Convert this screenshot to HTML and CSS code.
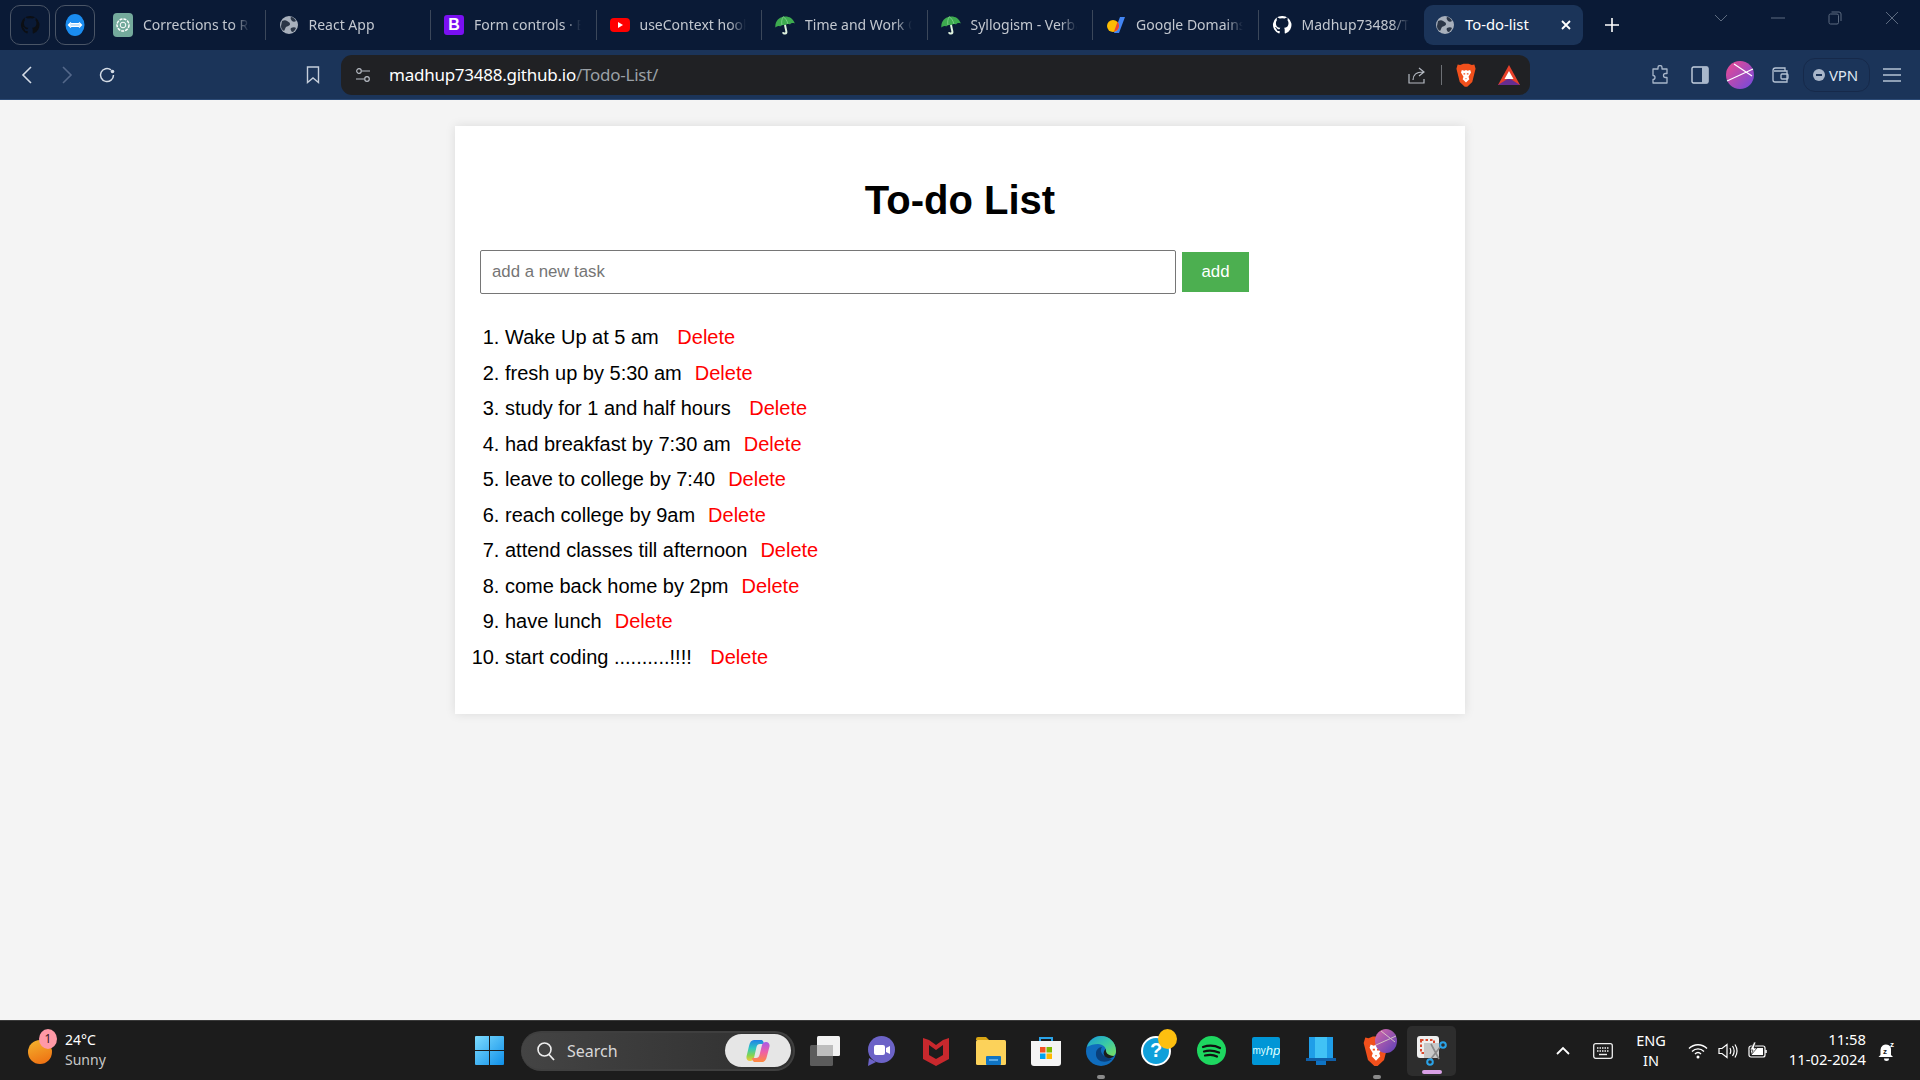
FILE: index.html
```html
<!DOCTYPE html>
<html lang="en">
<head>
<meta charset="utf-8">
<title>To-do-list</title>
<link rel="stylesheet" href="styles.css">
</head>
<body>
<svg class="defs" width="0" height="0" aria-hidden="true">
  <defs>
    <symbol id="globe" viewBox="0 0 20 20">
      <circle cx="10" cy="10" r="9" fill="#a8b0bc"/>
      <path d="M3 6c2-1 4-1 5 0s3 1 3 3-3 2-4 3-1 3-2 4c-2-1-3-3-3-5zM12 2c2 0 4 2 5 4-1 1-3 1-4 0s-2-3-1-4zM12 13c2-1 4-1 5 0-1 2-2 4-4 4-1-1-2-3-1-4z" fill="#2b3647"/>
    </symbol>
    <symbol id="umbrella" viewBox="0 0 20 20">
      <g transform="rotate(-12 10 10)">
        <path d="M0 10.500C1 4 5.500 1.500 10 1.500s9 2.500 10 9c-1.800-1.200-3.500-1.200-5 0-1.500-1.200-3.500-1.200-5 0-1.500-1.200-3.500-1.200-5 0-1.500-1.200-3.200-1.200-5 0z" fill="#3dab4f"/>
        <path d="M10 1.500c-2 2-3 5-3 8M10 1.500c2 2 3 5 3 8" fill="none" stroke="#7ed08a" stroke-width=".8"/>
        <path d="M10 10v6.500c0 2.400-3.500 2.400-3.500.2" fill="none" stroke="#dff2df" stroke-width="2"/>
      </g>
    </symbol>
    <symbol id="brave" viewBox="0 0 24 28">
      <path d="M5 2l4-1.500h6L19 2l3-.5 1.500 5-1 4-3 12-6 5.500h-3l-6-5.500-3-12-1-4L2 1.500z" fill="#f1501c"/>
      <path d="M7 8l3 1 2-1 2 1 3-1 1 3-3 5 1 3-4 4-4-4 1-3-3-5z" fill="#fff"/>
      <path d="M9 12h2v1.500H9zM13 12h2v1.500h-2zM11 18h2l-1 1.500z" fill="#f1501c"/>
    </symbol>
  </defs>
</svg>
<div class="window">
  <header class="tabstrip">
    <div class="pin">
      <svg width="20" height="20" viewBox="0 0 20 20"><path d="M10 1a9 9 0 0 0-3 17.500c.500 0 .700-.200.700-.500v-2c-2.500.500-3-1-3.200-1.800-.200-.500-.700-1-1-1.200-.400-.200-.800-.700 0-.700s1.300.700 1.500 1c.900 1.500 2.300 1 2.800.800 0-.600.300-1 .600-1.300-2.200-.200-4.500-1.100-4.500-4.900 0-1.100.400-2 1-2.700-.100-.200-.400-1.300.100-2.600 0 0 .800-.300 2.700 1a9 9 0 0 1 5 0c1.900-1.300 2.700-1 2.700-1 .500 1.300.200 2.400.100 2.600.600.700 1 1.600 1 2.700 0 3.800-2.300 4.700-4.500 4.900.400.300.700.900.700 1.900V18c0 .300.200.600.700.500A9 9 0 0 0 10 1z" fill="#0c0f14"/></svg>
    </div>
    <div class="pin">
      <svg width="20" height="22" viewBox="0 0 20 22"><ellipse cx="10" cy="11" rx="9.500" ry="11" fill="#1a8cf0"/><path d="M3.500 11h13M6 8.500L3.500 11 6 13.500M14 8.500l2.500 2.500-2.500 2.500" fill="none" stroke="#fff" stroke-width="1.300"/><path d="M6 9.500h8M6 12.500h8" stroke="#fff" stroke-width="1"/></svg>
    </div>
    <div class="tabs">
      <div class="tab">
        <svg class="favicon" width="20" height="24" viewBox="0 0 20 24"><rect width="20" height="24" rx="4" fill="#74aa9c"/><circle cx="10" cy="12" r="6" fill="none" stroke="#fff" stroke-width="1.500" stroke-dasharray="3 1"/><circle cx="10" cy="12" r="2.800" fill="none" stroke="#fff" stroke-width="1"/></svg>
        <span class="tab-title">Corrections to React App</span>
      </div>
      <div class="tab">
        <svg class="favicon" width="20" height="20"><use href="#globe"/></svg>
        <span class="tab-title">React App</span>
      </div>
      <div class="tab">
        <span class="favicon boot">B</span>
        <span class="tab-title">Form controls · Bootstrap</span>
      </div>
      <div class="tab">
        <svg class="favicon" width="20" height="20" viewBox="0 0 20 20"><rect y="3" width="20" height="14" rx="4" fill="#f00"/><path d="M8 7l5 3-5 3z" fill="#fff"/></svg>
        <span class="tab-title">useContext hook in React</span>
      </div>
      <div class="tab">
        <svg class="favicon" width="20" height="20"><use href="#umbrella"/></svg>
        <span class="tab-title">Time and Work Questions</span>
      </div>
      <div class="tab">
        <svg class="favicon" width="20" height="20"><use href="#umbrella"/></svg>
        <span class="tab-title">Syllogism - Verbal Reasoning</span>
      </div>
      <div class="tab">
        <svg class="favicon" width="20" height="20" viewBox="0 0 20 20"><path d="M14 2h5l-6 16H8z" fill="#4285f4"/><circle cx="7" cy="11" r="6" fill="#fbbc04"/><path d="M11.500 7L8 16.500a6 6 0 0 0 5-5.500c0-1.500-.500-3-1.500-4z" fill="#ea4335"/></svg>
        <span class="tab-title">Google Domains</span>
      </div>
      <div class="tab tab-last">
        <svg class="favicon" width="20" height="20" viewBox="0 0 20 20"><path d="M10 1a9 9 0 0 0-3 17.500c.500 0 .700-.200.700-.500v-2c-2.500.500-3-1-3.200-1.800-.200-.500-.700-1-1-1.200-.400-.200-.800-.700 0-.700s1.300.700 1.500 1c.900 1.500 2.300 1 2.800.800 0-.600.300-1 .600-1.300-2.200-.200-4.500-1.100-4.500-4.900 0-1.100.400-2 1-2.700-.100-.200-.400-1.300.100-2.600 0 0 .800-.300 2.700 1a9 9 0 0 1 5 0c1.900-1.300 2.700-1 2.700-1 .500 1.300.200 2.400.100 2.600.600.700 1 1.600 1 2.700 0 3.800-2.300 4.700-4.500 4.900.400.300.700.900.700 1.900V18c0 .300.200.600.700.500A9 9 0 0 0 10 1z" fill="#fff"/></svg>
        <span class="tab-title">Madhup73488/Todo-List</span>
      </div>
      <div class="tab-active">
        <svg class="favicon" width="20" height="20"><use href="#globe"/></svg>
        <span class="active-title">To-do-list</span>
        <svg width="12" height="12" viewBox="0 0 12 12"><path d="M2 2l8 8M10 2l-8 8" stroke="#fff" stroke-width="1.800"/></svg>
      </div>
    </div>
    <div class="newtab"><svg width="16" height="16" viewBox="0 0 16 16"><path d="M8 1v14M1 8h14" stroke="#fff" stroke-width="1.600"/></svg></div>
    <div class="winctl winctl-list"><svg width="14" height="8" viewBox="0 0 14 8"><path d="M1 1l6 6 6-6" fill="none" stroke="#5d6b80" stroke-width="1"/></svg></div>
    <div class="winctl"><svg width="14" height="2" viewBox="0 0 14 2"><path d="M0 1h14" stroke="#5d6b80" stroke-width="1"/></svg></div>
    <div class="winctl"><svg width="14" height="14" viewBox="0 0 14 14"><rect x="1" y="3" width="9.500" height="10" rx="1.500" fill="none" stroke="#5d6b80"/><path d="M3.500 1h7.500a2 2 0 0 1 2 2v7" fill="none" stroke="#5d6b80"/></svg></div>
    <div class="winctl"><svg width="14" height="14" viewBox="0 0 14 14"><path d="M1 1l12 12M13 1L1 13" stroke="#5d6b80" stroke-width="1"/></svg></div>
  </header>

  <nav class="toolbar">
    <div class="tbtn"><svg width="12" height="18" viewBox="0 0 12 18"><path d="M10 1L2 9l8 8" fill="none" stroke="#d5dce6" stroke-width="1.600"/></svg></div>
    <div class="tbtn"><svg width="12" height="18" viewBox="0 0 12 18"><path d="M2 1l8 8-8 8" fill="none" stroke="#54688a" stroke-width="1.600"/></svg></div>
    <div class="tbtn"><svg width="18" height="18" viewBox="0 0 18 18"><path d="M15.500 9a6.500 6.500 0 1 1-2.500-5.100" fill="none" stroke="#d5dce6" stroke-width="1.500"/><circle cx="14.500" cy="5.500" r="1.800" fill="#d5dce6"/></svg></div>
    <div class="tbtn bookmark"><svg width="14" height="18" viewBox="0 0 14 18"><path d="M1.500 1h11v15.500L7 12l-5.500 4.500z" fill="none" stroke="#c5cedb" stroke-width="1.400"/></svg></div>
    <div class="urlbar">
      <svg class="url-tune" width="16" height="16" viewBox="0 0 16 16"><circle cx="4" cy="4" r="2.300" fill="none" stroke="#b8bdc5" stroke-width="1.200"/><path d="M7 4h8M1 12h8" stroke="#b8bdc5" stroke-width="1.200"/><circle cx="12" cy="12" r="2.300" fill="none" stroke="#b8bdc5" stroke-width="1.200"/></svg>
      <span class="url-text"><span class="url-host">madhup73488.github.io</span><span class="url-path">/Todo-List/</span></span>
      <svg class="url-share" width="18" height="18" viewBox="0 0 18 18"><path d="M1 8v9h15v-4" fill="none" stroke="#b5bac2" stroke-width="1.200"/><path d="M5 14c0-5 3-8 10-8M11 2l5 4-5 4" fill="none" stroke="#b5bac2" stroke-width="1.200"/></svg>
      <span class="url-sep"></span>
      <svg class="url-brave" width="20" height="24"><use href="#brave"/></svg>
      <svg class="url-bat" width="24" height="22" viewBox="0 0 24 22"><path d="M12 1L1 21h22z" fill="#e8412b"/><path d="M1 21l11-7 11 7z" fill="#662d91"/><path d="M12 7l-4.500 8h9z" fill="#fff"/></svg>
    </div>
    <div class="tbtn ext-first"><svg width="18" height="20" viewBox="0 0 18 20"><path d="M7 2.500a2 2 0 0 1 4 0V4h5v4.500h-1.500a2 2 0 0 0 0 4H16V18H2v-3.500a2 2 0 0 0 0-4V4h5z" fill="none" stroke="#a8b6ca" stroke-width="1.300" stroke-linejoin="round"/></svg></div>
    <div class="tbtn"><svg width="18" height="18" viewBox="0 0 18 18"><rect x="1" y="1" width="16" height="16" rx="1.500" fill="#1b3459" stroke="#c5d0df" stroke-width="1.400"/><rect x="11" y="1" width="6" height="16" fill="#a9b8cc"/></svg></div>
    <div class="tbtn"><svg width="28" height="28" viewBox="0 0 28 28"><defs><linearGradient id="av" x1="0" y1="0" x2="1" y2="1"><stop offset="0" stop-color="#ef4a8e"/><stop offset="1" stop-color="#6d4ae0"/></linearGradient></defs><circle cx="14" cy="14" r="14" fill="url(#av)"/><path d="M1 20L27 8M8 3l18 12" stroke="#fff" stroke-width="1.200"/></svg></div>
    <div class="tbtn"><svg width="18" height="18" viewBox="0 0 18 18"><path d="M2 4.500A2.500 2.500 0 0 1 4.500 2H14v2.500M2 4.500V14a2 2 0 0 0 2 2h12V5H3" fill="none" stroke="#b5c2d4" stroke-width="1.300"/><rect x="10" y="8" width="7" height="5" rx="1" fill="none" stroke="#b5c2d4" stroke-width="1.300"/></svg></div>
    <div class="vpn"><span class="vpn-dot"></span>VPN</div>
    <div class="tbtn menu"><svg width="18" height="14" viewBox="0 0 18 14"><path d="M0 1h18M0 7h18M0 13h18" stroke="#b5c2d4" stroke-width="1.400"/></svg></div>
  </nav>

  <main class="page">
    <section class="card">
      <h1 class="title">To-do List</h1>
      <div class="add-row">
        <input class="task-input" type="text" placeholder="add a new task">
        <button class="add-btn">add</button>
      </div>
      <ol class="tasks">
        <li><span class="task">Wake Up at 5 am </span><button class="delete">Delete</button></li>
        <li><span class="task">fresh up by 5:30 am</span><button class="delete">Delete</button></li>
        <li><span class="task">study for 1 and half hours </span><button class="delete">Delete</button></li>
        <li><span class="task">had breakfast by 7:30 am</span><button class="delete">Delete</button></li>
        <li><span class="task">leave to college by 7:40</span><button class="delete">Delete</button></li>
        <li><span class="task">reach college by 9am</span><button class="delete">Delete</button></li>
        <li><span class="task">attend classes till afternoon</span><button class="delete">Delete</button></li>
        <li><span class="task">come back home by 2pm</span><button class="delete">Delete</button></li>
        <li><span class="task">have lunch</span><button class="delete">Delete</button></li>
        <li><span class="task">start coding ..........!!!! </span><button class="delete">Delete</button></li>
      </ol>
    </section>
  </main>

  <footer class="taskbar">
    <div class="weather">
      <div class="sun"><span class="sun-badge">1</span></div>
      <div class="weather-text"><span class="temp">24°C</span><span class="cond">Sunny</span></div>
    </div>
    <svg class="start" width="29" height="29" viewBox="0 0 29 29"><defs><linearGradient id="win" x1="0" y1="0" x2="1" y2="1"><stop offset="0" stop-color="#7ddcff"/><stop offset="1" stop-color="#0f8fe8"/></linearGradient></defs><path d="M0 1a1 1 0 0 1 1-1h13v14H0zM15 0h13a1 1 0 0 1 1 1v13H15zM0 15h14v14H1a1 1 0 0 1-1-1zM15 15h14v13a1 1 0 0 1-1 1H15z" fill="url(#win)"/></svg>
    <div class="search">
      <svg width="20" height="20" viewBox="0 0 20 20"><circle cx="8.500" cy="8.500" r="6.500" fill="none" stroke="#eee" stroke-width="1.600"/><path d="M13 13.500l5 5.500" stroke="#eee" stroke-width="1.800"/></svg>
      <span class="search-label">Search</span>
      <span class="copilot">
        <svg width="24" height="24" viewBox="0 0 24 24"><defs><linearGradient id="cp" x1="0" y1="0" x2="0" y2="1"><stop offset="0" stop-color="#1f7fe8"/><stop offset=".4" stop-color="#2fc7c0"/><stop offset=".75" stop-color="#8bd44a"/><stop offset="1" stop-color="#f7c83d"/></linearGradient><linearGradient id="cp2" x1="0" y1="0" x2="0" y2="1"><stop offset="0" stop-color="#a65ae8"/><stop offset=".5" stop-color="#ee5fa8"/><stop offset="1" stop-color="#ff8a3d"/></linearGradient></defs><path d="M8 1h7c1 0 2 .5 2.500 2L18 5h-4c-2 0-3 1-3.500 3L8 19c-.5 2-2 3-4 3-2.500 0-4-2-3.500-4.500L3 7c.8-4 2.500-6 5-6z" fill="url(#cp)"/><path d="M16 23H9c-1 0-2-.5-2.500-2L6 19h4c2 0 3-1 3.500-3L16 6c.5-2 2-3 4-3 2.500 0 4 2 3.500 4.500L21 17c-.8 4-2.500 6-5 6z" fill="url(#cp2)"/></svg>
      </span>
    </div>
    <div class="apps">
      <div class="app"><svg width="32" height="30" viewBox="0 0 32 30"><rect x="0" y="9" width="23" height="21" rx="1.500" fill="#5b5b5b"/><rect x="7" y="0" width="23" height="20" rx="1.500" fill="#f2f2f2"/><rect x="7" y="9" width="16" height="11" fill="#bdbdbd"/></svg></div>
      <div class="app"><svg width="28" height="30" viewBox="0 0 28 30"><circle cx="14.500" cy="13.500" r="13.500" fill="#6c63c7"/><path d="M2 22L1 30l8-4z" fill="#6c63c7"/><rect x="7" y="9" width="11" height="10" rx="2" fill="#fff"/><path d="M19 12l4-2v8l-4-2z" fill="#fff"/></svg></div>
      <div class="app"><svg width="26" height="30" viewBox="0 0 26 30"><path d="M0 2l6 2 7 5 7-5 6-2v21l-13 7-13-7z" fill="#c8282d"/><path d="M6 9l7 5 7-5v10l-7 4-7-4z" fill="#1c1c1c"/></svg></div>
      <div class="app"><svg width="30" height="28" viewBox="0 0 30 28"><path d="M0 2a2 2 0 0 1 2-2h8l3 3h-13z" fill="#d9a514"/><rect y="3" width="30" height="25" rx="1.500" fill="#fcd25a"/><rect x="10" y="19" width="15" height="9" rx="1" fill="#0f74c4"/><path d="M13 23h9" stroke="#8fd0ff" stroke-width="1.200"/></svg></div>
      <div class="app"><svg width="30" height="30" viewBox="0 0 30 30"><path d="M9 5V2h12v3" fill="none" stroke="#2aa3e8" stroke-width="2"/><path d="M0 5h30v22a3 3 0 0 1-3 3H3a3 3 0 0 1-3-3z" fill="#f4f4f4"/><rect x="9" y="11" width="5.500" height="5.500" fill="#f25022"/><rect x="15.500" y="11" width="5.500" height="5.500" fill="#7fba00"/><rect x="9" y="17.500" width="5.500" height="5.500" fill="#00a4ef"/><rect x="15.500" y="17.500" width="5.500" height="5.500" fill="#ffb900"/></svg></div>
      <div class="app app-run"><svg width="30" height="30" viewBox="0 0 30 30"><defs><linearGradient id="edge" x1="0" y1="0" x2="1" y2="1"><stop offset="0" stop-color="#1a9ad6"/><stop offset=".5" stop-color="#38c9a7"/><stop offset="1" stop-color="#7ee05b"/></linearGradient></defs><circle cx="15" cy="15" r="15" fill="#0f6cbd"/><path d="M1 11C3 4 9 0 15 0c8 0 15 6 15 15 0 4-3 6-6 6-3 0-5-2-4-5 1-4-3-8-8-8-4 0-8 1-11 3z" fill="url(#edge)"/><path d="M26 23c-6 5-17 3-16-6 0-3 3-6 6-6-3 4 0 10 10 12z" fill="#0a3f7a"/><path d="M28 20c-2 3-8 3-10-1-1-2 0-5 2-6-1 3 2 7 8 7z" fill="#1c1c1c"/></svg></div>
      <div class="app"><div class="help"><span class="help-mark">?</span><span class="help-dot"></span></div></div>
      <div class="app"><svg width="29" height="29" viewBox="0 0 29 29"><circle cx="14.500" cy="14.500" r="14.500" fill="#1ed760"/><path d="M6 11c6-2 12-1.500 17 1M7 15.500c5-1.500 10-1 15 1M8 19.500c4-1 9-.7 12 1" fill="none" stroke="#111" stroke-width="2.200" stroke-linecap="round"/></svg></div>
      <div class="app"><span class="myhp">my<i>hp</i></span></div>
      <div class="app"><svg width="30" height="28" viewBox="0 0 30 28"><path d="M3 0h24v22H3z" fill="#1f9ee8"/><path d="M9 0h12v22H9z" fill="#41c2f5"/><path d="M0 21h30v3H0z" fill="#0f5fa8"/><path d="M10 24h10v4H10z" fill="#0f74c4"/></svg></div>
      <div class="app app-run"><svg class="brave-task" width="26" height="30"><use href="#brave"/></svg>
        <svg class="profile" width="22" height="24" viewBox="0 0 22 24"><defs><linearGradient id="pf" x1="0" y1="0" x2="1" y2="1"><stop offset="0" stop-color="#d96aa8"/><stop offset="1" stop-color="#5a3fb8"/></linearGradient></defs><ellipse cx="11" cy="12" rx="11" ry="12" fill="url(#pf)"/><path d="M1 16L21 7M6 2l14 11" stroke="#eec" stroke-width="1" opacity=".7"/></svg>
      </div>
      <div class="app app-active">
        <svg width="30" height="30" viewBox="0 0 30 30"><rect x="0" y="0" width="22" height="22" rx="3" fill="#efefef"/><rect x="4" y="4" width="13" height="13" fill="none" stroke="#d9482e" stroke-width="2" stroke-dasharray="2.500 2"/><rect x="7" y="7" width="15" height="15" fill="#c8c8c8"/><path d="M14 8l8 15M24 10L13 24" stroke="#8a8a8a" stroke-width="1.600"/><circle cx="26" cy="9" r="2.800" fill="none" stroke="#2aa3e8" stroke-width="2"/><circle cx="13" cy="26" r="2.800" fill="none" stroke="#2aa3e8" stroke-width="2"/></svg>
      </div>
    </div>
    <div class="tray">
      <div class="tray-item w40"><svg width="14" height="9" viewBox="0 0 14 9"><path d="M1 8l6-6 6 6" fill="none" stroke="#fff" stroke-width="1.800"/></svg></div>
      <div class="tray-item w40"><svg width="20" height="16" viewBox="0 0 20 16"><rect x=".700" y=".700" width="18.600" height="14.600" rx="2" fill="none" stroke="#eee" stroke-width="1.300"/><path d="M4 5h12M4 8h12" stroke="#eee" stroke-width="1.500" stroke-dasharray="1.500 1"/><path d="M6 11.500h8" stroke="#eee" stroke-width="1.400"/></svg></div>
      <div class="lang"><span>ENG</span><span>IN</span></div>
      <div class="tray-item w30"><svg width="20" height="16" viewBox="0 0 20 16"><path d="M1 5.500c5-5 13-5 18 0M4 8.500c3.500-3.500 8.500-3.500 12 0M7 11c2-2 4-2 6 0" fill="none" stroke="#fff" stroke-width="1.400"/><circle cx="10" cy="14" r="1.500" fill="#fff"/></svg></div>
      <div class="tray-item w30"><svg width="20" height="18" viewBox="0 0 20 18"><path d="M1 6.500h3L9 2.500v13l-5-4H1z" fill="none" stroke="#fff" stroke-width="1.200"/><path d="M12 6c1 2 1 4 0 6M14.500 4c2 3 2 7 0 10M17 2.500c2.500 4 2.500 9 0 13" fill="none" stroke="#fff" stroke-width="1.200"/></svg></div>
      <div class="tray-item w30"><svg width="20" height="18" viewBox="0 0 20 18"><rect x="1" y="4" width="16" height="11" rx="2" fill="none" stroke="#fff" stroke-width="1.200"/><rect x="3" y="6" width="12" height="7" fill="#fff"/><path d="M18 8v3" stroke="#fff" stroke-width="1.500"/><path d="M6 0L2 8h3l-2 5 6-7H6l2-6z" fill="#fff" stroke="#1c1c1c" stroke-width=".700"/></svg></div>
      <div class="clock"><span>11:58</span><span>11-02-2024</span></div>
      <div class="bell"><svg width="18" height="20" viewBox="0 0 18 20"><path d="M2.500 14V9a5.500 5.500 0 0 1 7-5.300c1 .3 2.500 1 3 2.300.500 1 .500 2 .500 3v5l2 2H.500z" fill="#fff"/><path d="M6 17.500h5a2.500 2.500 0 0 1-5 0z" fill="#fff"/><text class="bell-z" x="5" y="13">z</text><text class="bell-z2" x="12" y="6">z</text></svg></div>
    </div>
  </footer>
</div>
</body>
</html>
```

FILE: styles.css
```css
* { box-sizing: border-box; }
html, body { margin: 0; padding: 0; height: 100%; overflow: hidden; }
body { font-family: "Liberation Sans", Arial, sans-serif; background: #f4f4f4; }
.defs { position: absolute; }
.window { display: flex; flex-direction: column; height: 1080px; width: 1920px; }

/* Tab strip */
.tabstrip { display: flex; align-items: center; height: 50px; padding-left: 10px; background: #0a1a36; flex: none; }
.pin { display: flex; align-items: center; justify-content: center; width: 40px; height: 40px; margin-right: 5px; border: 1px solid #4a5566; border-radius: 10px; }
.tabs { display: flex; align-items: center; }
.tab { display: flex; align-items: center; gap: 10px; width: 165.500px; height: 30px; padding-left: 13px; padding-right: 15px; border-right: 1px solid #3b475a; font-family: "Noto Sans", sans-serif; font-size: 14px; color: #c3c8d0; overflow: hidden; }
.tab-last { border-right: none; }
.tab-title { flex: 1; min-width: 0; padding-bottom: 2px; white-space: nowrap; overflow: hidden; -webkit-mask-image: linear-gradient(to right, #000 84%, transparent 100%); mask-image: linear-gradient(to right, #000 84%, transparent 100%); }
.favicon { flex: none; }
.boot { display: flex; align-items: center; justify-content: center; width: 20px; height: 20px; background: #7a10f2; border-radius: 3px; color: #fff; font-family: "Liberation Sans", sans-serif; font-size: 16px; font-weight: 700; }
.tab-active { display: flex; align-items: center; gap: 10px; width: 159px; height: 40px; padding: 0 11px 0 11px; background: #1b3459; border-radius: 9px; font-family: "Noto Sans", sans-serif; font-size: 14.800px; color: #fff; }
.active-title { flex: 1; padding-bottom: 2px; white-space: nowrap; }
.newtab { display: flex; align-items: center; justify-content: center; width: 40px; height: 40px; margin-left: 9px; }
.winctl { display: flex; align-items: center; justify-content: center; align-self: flex-start; width: 57px; height: 36px; }
.winctl-list { width: 40px; margin-left: 69px; margin-right: 8px; }

/* Toolbar */
.toolbar { display: flex; align-items: center; height: 50px; padding-left: 7px; background: #1b3459; border-bottom: 1px solid #2c4a75; flex: none; }
.tbtn { display: flex; align-items: center; justify-content: center; width: 40px; height: 40px; flex: none; }
.bookmark { margin-left: 166px; }
.urlbar { display: flex; align-items: center; width: 1189px; height: 40px; margin-left: 8px; padding-left: 14px; background: #202124; border-radius: 11px; flex: none; }
.url-text { margin-left: 18px; font-family: "Noto Sans", sans-serif; font-size: 17px; flex: 1; letter-spacing: -.25px; }
.url-host { color: #fff; }
.url-path { color: #9aa0a6; }
.url-share { margin-right: 15px; }
.url-sep { width: 1px; height: 20px; background: #6d7075; margin-right: 14px; }
.url-brave { margin-right: 21px; }
.url-bat { margin-right: 9px; }
.ext-first { margin-left: 110px; }
.vpn { display: flex; align-items: center; gap: 4px; width: 67px; height: 34px; margin-left: 3px; padding-left: 9px; border: 1px solid #16294a; border-radius: 12px; font-family: "Noto Sans", sans-serif; font-size: 15px; color: #dfe6ef; flex: none; letter-spacing: -.2px; }
.vpn-dot { width: 12px; height: 12px; border-radius: 50%; background: #a9b6c9; flex: none; position: relative; }
.vpn-dot::after { content: ""; position: absolute; left: 3px; right: 3px; top: 5px; height: 2px; background: #1b3459; }
.menu { margin-left: 2px; }

/* Page */
.page { flex: 1; min-height: 0; display: flex; justify-content: center; align-items: flex-start; padding-top: 26px; background: #f4f4f4; }
.card { width: 1010px; padding: 25px; background: #fff; box-shadow: 0 0 10px rgba(0, 0, 0, .1); }
.title { margin: 26px 0 26.800px; font-size: 40px; font-weight: 700; line-height: 46px; text-align: center; color: #000; }
.add-row { display: flex; align-items: center; gap: 6px; }
.task-input { width: 696px; height: 44px; padding: 0 11px; border: 1px solid #767676; border-radius: 2px; background: #fff; font: 16.800px "Liberation Sans", Arial, sans-serif; color: #000; }
.task-input::placeholder { color: #757575; opacity: 1; }
.add-btn { width: 67px; height: 40px; padding: 0; border: none; background: #4caf50; color: #fff; font: 16.800px "Liberation Sans", Arial, sans-serif; }
.tasks { margin: 26.300px 0 13.900px; padding-left: 25px; font-size: 20px; line-height: 35.500px; color: #000; }
.task { white-space: pre; }
.delete { margin-left: 13px; padding: 0; border: none; background: none; color: #f00; font: inherit; }

/* Taskbar */
.taskbar { display: flex; align-items: center; height: 60px; background: #1c1c1c; border-top: 1px solid #3a3a3a; flex: none; font-family: "Noto Sans", sans-serif; color: #fff; }
.weather { display: flex; align-items: center; width: 475px; padding-left: 28px; height: 100%; flex: none; }
.sun { position: relative; width: 24px; height: 24px; border-radius: 50%; background: linear-gradient(160deg, #f4b52e, #ee6a10); margin-top: 2px; }
.sun-badge { position: absolute; left: 11px; top: -11px; width: 18px; height: 20px; border-radius: 50%; background: #ff99a6; color: #3a1a1f; font-size: 12px; line-height: 20px; text-align: center; }
.weather-text { display: flex; flex-direction: column; margin-left: 13px; margin-top: -2px; font-size: 14px; line-height: 20px; }
.temp { color: #fff; }
.cond { color: #c8c8c8; }
.start { flex: none; }
.search { display: flex; align-items: center; width: 274px; height: 40px; margin-left: 17px; padding: 0 2px 0 15px; border-radius: 20px; background: linear-gradient(to right, #444, #2f2f2f); border: 2px solid #3f3f3f; border-left: none; flex: none; }
.search-label { flex: 1; margin-left: 11px; font-size: 16px; color: #d8d8d8; }
.copilot { display: flex; align-items: center; justify-content: center; width: 66px; height: 33px; border-radius: 17px; background: #e6e6e6; }
.apps { display: flex; align-items: center; margin-left: 3px; height: 100%; flex: none; }
.app { position: relative; display: flex; align-items: center; justify-content: center; width: 55.100px; height: 50px; flex: none; }
.app-run::after { content: ""; position: absolute; bottom: -3px; left: 24px; width: 8px; height: 4px; border-radius: 2px; background: #8a8a8a; }
.app-active::before { content: ""; position: absolute; inset: 0 3px; background: #2d2d2d; border-radius: 5px; }
.app-active::after { content: ""; position: absolute; bottom: 2px; left: 18px; width: 20px; height: 4px; border-radius: 2px; background: #d9a0e6; }
.app-active svg { position: relative; }
.help { position: relative; width: 30px; height: 30px; border-radius: 50%; background: #10a0da; border: 2px solid #fff; display: flex; align-items: center; justify-content: center; }
.help-mark { color: #fff; font: 700 20px "Liberation Sans", sans-serif; }
.help-dot { position: absolute; right: -8px; top: -9px; width: 19px; height: 20px; border-radius: 50%; background: #fdbf0f; }
.myhp { display: flex; align-items: center; justify-content: center; width: 28px; height: 28px; background: #0096d6; border-radius: 2px; color: #dff; font-family: "Liberation Sans", sans-serif; font-size: 10px; white-space: nowrap; overflow: hidden; }
.myhp i { font-size: 13px; }
.brave-task { position: relative; left: 0; }
.profile { position: absolute; right: 7px; top: 3px; }
.tray { display: flex; align-items: center; margin-left: auto; height: 100%; padding-right: 21px; flex: none; }
.tray-item { display: flex; align-items: center; justify-content: center; height: 100%; flex: none; }
.w40 { width: 40px; }
.w30 { width: 30px; }
.lang { display: flex; flex-direction: column; align-items: center; width: 56px; margin-right: 4px; margin-top: -2px; font-size: 14.500px; line-height: 20px; }
.clock { display: flex; flex-direction: column; align-items: flex-end; width: 93px; font-size: 14.800px; line-height: 20px; margin-top: -4px; }
.bell { display: flex; justify-content: center; width: 24px; margin-left: 9px; }
.bell-z { font: 700 8px "Liberation Sans", sans-serif; fill: #1c1c1c; }
.bell-z2 { font: 700 8px "Liberation Sans", sans-serif; fill: #fff; }
```
